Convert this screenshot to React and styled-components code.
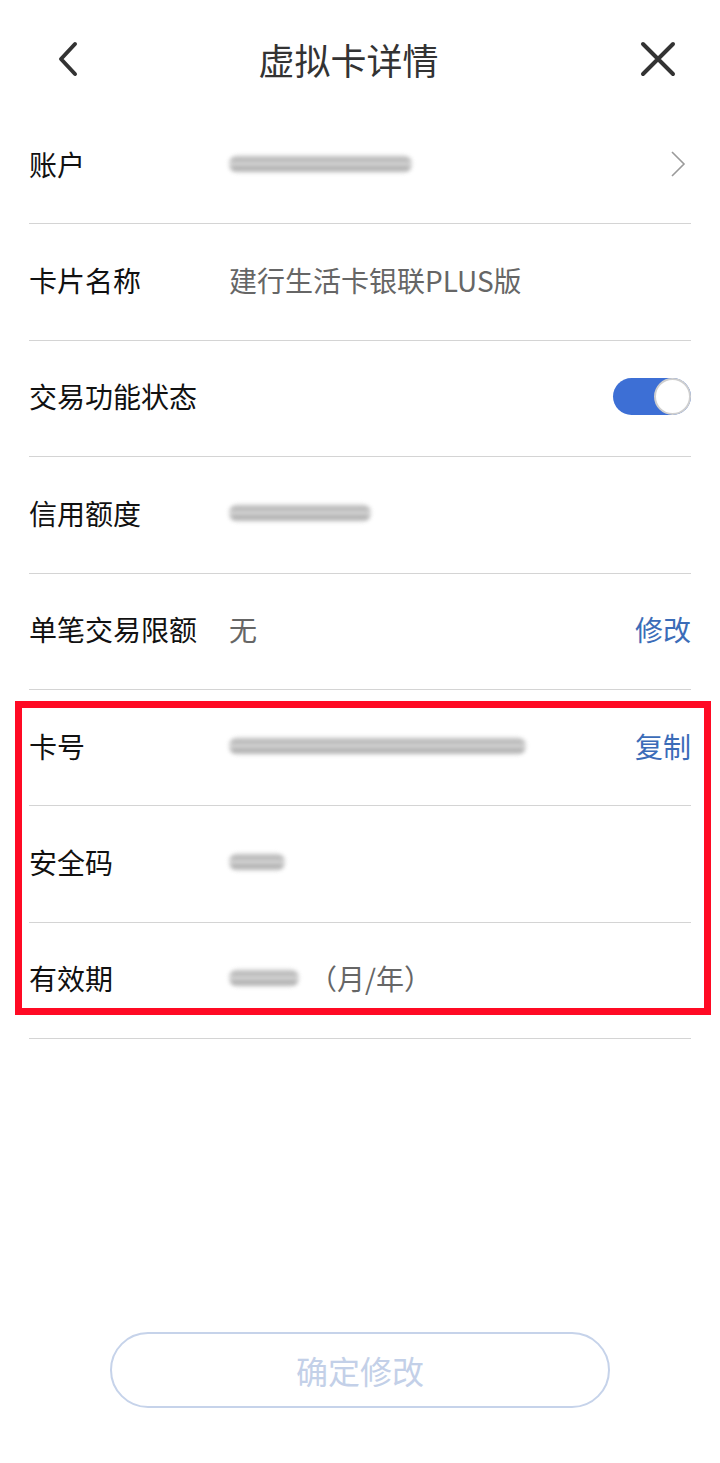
import React from 'react'
import styled, { createGlobalStyle } from 'styled-components'

const GlobalStyle = createGlobalStyle`
	html, body {
		margin: 0;
		padding: 0;
		background: #ffffff;
	}
	body {
		font-family: "Noto Sans CJK SC", "Liberation Sans", sans-serif;
	}
`;

const rows = [
	{ label: '账户', blur: 183, arrow: true },
	{ label: '卡片名称', value: '建行生活卡银联PLUS版' },
	{ label: '交易功能状态', toggle: true },
	{ label: '信用额度', blur: 142 },
	{ label: '单笔交易限额', value: '无', action: '修改' },
];

const cardRows = [
	{ label: '卡号', blur: 297, action: '复制' },
	{ label: '安全码', blur: 56 },
	{ label: '有效期', blur: 70, suffix: '（月/年）' },
];

const DetailRow = ({ row }) => (
	<Row>
		<Label>{row.label}</Label>
		<Value>
			{row.blur && <Smudge style={{ width: row.blur }} />}
			{row.value}
			{row.suffix && <Suffix>{row.suffix}</Suffix>}
		</Value>
		{row.action && <Action>{row.action}</Action>}
		{row.arrow && (
			<Arrow width="16" height="28" viewBox="0 0 16 28">
				<polyline points="2,2 14,14 2,26" fill="none" stroke="#9a9a9a" strokeWidth="1.6" />
			</Arrow>
		)}
		{row.toggle && (
			<Toggle>
				<Knob />
			</Toggle>
		)}
	</Row>
);

const App = () => {
	return (
		<Page>
			<GlobalStyle />
			<Header>
				<IconButton>
					<svg width="26" height="36" viewBox="0 0 26 36">
						<polyline points="20,3 6,18 20,33" fill="none" stroke="#333" strokeWidth="4" strokeLinecap="round" strokeLinejoin="round" />
					</svg>
				</IconButton>
				<Title>虚拟卡详情</Title>
				<IconButton>
					<svg width="36" height="36" viewBox="0 0 36 36">
						<path d="M3 3 L33 33 M33 3 L3 33" fill="none" stroke="#333" strokeWidth="4" strokeLinecap="round" />
					</svg>
				</IconButton>
			</Header>
			<List>
				{rows.map((r) => (
					<DetailRow key={r.label} row={r} />
				))}
				<Highlighted>
					{cardRows.map((r) => (
						<DetailRow key={r.label} row={r} />
					))}
				</Highlighted>
			</List>
			<Footer>
				<ConfirmButton>确定修改</ConfirmButton>
			</Footer>
		</Page>
	)
}

const Page = styled.div`
	width: 720px;
	height: 1463px;
	background: #fff;
	display: flex;
	flex-direction: column;
	overflow: hidden;
`;

const Header = styled.div`
	height: 108px;
	box-sizing: border-box;
	padding: 10px 44px 0 55px;
	display: flex;
	align-items: center;
	justify-content: space-between;
`;

const IconButton = styled.div`
	display: flex;
	align-items: center;
	justify-content: center;
`;

const Title = styled.div`
	font-size: 36px;
	color: #333;
	line-height: 40px;
	margin-left: -24px;
`;

const List = styled.div`
	margin: 0 29px;
	display: flex;
	flex-direction: column;
`;

const Highlighted = styled.div`
	position: relative;

	&::after {
		content: '';
		position: absolute;
		top: 11px;
		bottom: 24px;
		left: -14px;
		right: -20px;
		border: 7px solid #ff0a24;
		pointer-events: none;
	}
`;

const Row = styled.div`
	height: 116.4px;
	box-sizing: border-box;
	border-bottom: 1px solid #d4d4d4;
	display: flex;
	align-items: center;
	padding-bottom: 4px;
`;

const Label = styled.div`
	width: 200px;
	flex-shrink: 0;
	font-size: 28px;
	color: #111;
`;

const Value = styled.div`
	flex: 1;
	display: flex;
	align-items: center;
	font-size: 28px;
	color: #666;
`;

const Smudge = styled.div`
	height: 18px;
	border-radius: 9px;
	background: linear-gradient(180deg, #e6e6e6 0%, #9e9e9e 25%, #dadada 50%, #8f8f8f 78%, #eeeeee 100%);
	filter: blur(2px);
	opacity: 0.85;
`;

const Suffix = styled.span`
	margin-left: 10px;
	color: #666;
`;

const Action = styled.div`
	font-size: 28px;
	color: #3b6cb8;
`;

const Arrow = styled.svg`
	margin-right: 5px;
`;

const Toggle = styled.div`
	width: 78px;
	height: 37px;
	border-radius: 19px;
	background: #3d6fd5;
	display: flex;
	align-items: center;
	justify-content: flex-end;
`;

const Knob = styled.div`
	width: 33px;
	height: 33px;
	border-radius: 50%;
	background: #fff;
	border: 2px solid #cfcfcf;
`;

const Footer = styled.div`
	margin-top: auto;
	padding-bottom: 55px;
	display: flex;
	justify-content: center;
`;

const ConfirmButton = styled.div`
	width: 500px;
	height: 76px;
	box-sizing: border-box;
	border: 2px solid #c6d3ea;
	border-radius: 38px;
	display: flex;
	align-items: center;
	justify-content: center;
	font-size: 32px;
	color: #c3d0e8;
`;

export default App
